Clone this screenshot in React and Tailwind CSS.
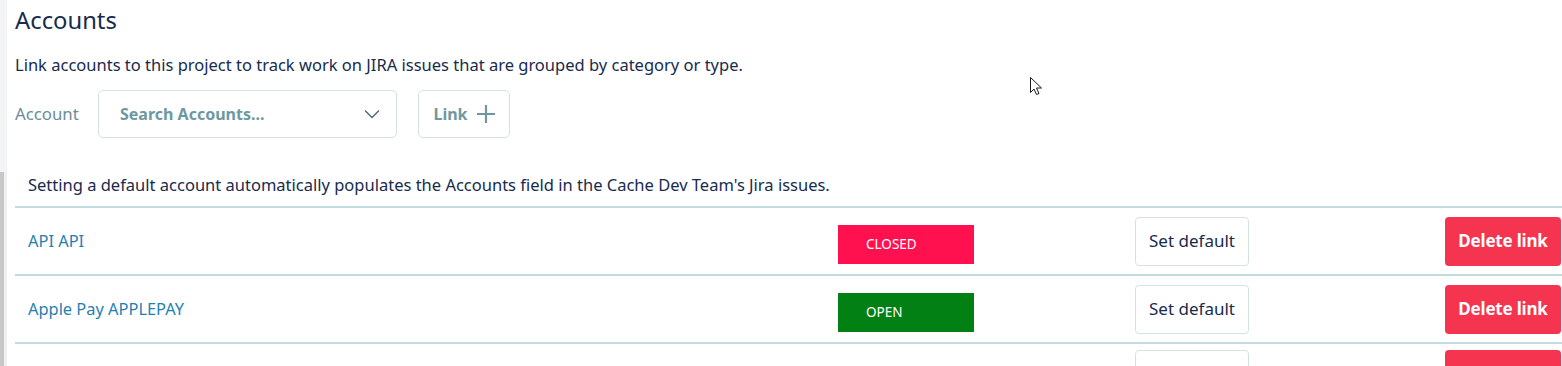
import React from "react";

const rows = [
  { name: "API API", status: "CLOSED", labels: true },
  { name: "Apple Pay APPLEPAY", status: "OPEN", labels: true },
  { name: "", status: null, labels: false },
];

function Row({ name, status, labels }) {
  return (
    <div className="grid grid-cols-[823px_297px_310px_117px] items-center h-[68px] border-t-2 border-[#c3dce3]">
      <div className="pl-[13px] text-[16.4px] text-[#1f80b3]">{name}</div>
      <div>
        {status && (
          <div
            className={
              "mt-[7px] w-[136px] h-[39px] flex items-center pl-[28px] text-[13.5px] text-white " +
              (status === "CLOSED" ? "bg-[#ff1150]" : "bg-[#028013]")
            }
          >
            {status}
          </div>
        )}
      </div>
      <div>
        <button className="w-[114px] h-[49px] rounded-[4px] border border-[#d3e2e8] bg-white text-[17px] text-[#172b4d]">
          {labels ? "Set default" : ""}
        </button>
      </div>
      <div>
        <button className="w-[116px] h-[49px] rounded-[4px] bg-[#f5344f] text-[17px] font-bold text-white tracking-[-0.2px]">
          {labels ? "Delete link" : ""}
        </button>
      </div>
    </div>
  );
}

export default function App() {
  return (
    <div
      className="relative flex w-[1562px] h-[366px] overflow-hidden bg-white"
      style={{ fontFamily: '"Noto Sans", "Open Sans", sans-serif' }}
    >
      <div className="w-[7px] flex flex-col shrink-0">
        <div className="h-[172px] bg-[#f3f4f5]" />
        <div className="flex-1 flex">
          <div className="w-[4px] bg-[#c8c8c8]" />
          <div className="w-[3px] bg-[#f0f0f0]" />
        </div>
      </div>
      <div className="flex-1 pl-[8px]">
        <h1 className="text-[23.8px] leading-[28px] text-[#172b4d] mt-[6px]">Accounts</h1>
        <p className="text-[16.5px] leading-[22px] text-[#172b4d] mt-[20px]">
          Link accounts to this project to track work on JIRA issues that are grouped by category or type.
        </p>
        <div className="flex items-center mt-[14px] h-[48px]">
          <span className="text-[16.8px] text-[#6b8d96] w-[83px]">Account</span>
          <div className="w-[299px] h-[48px] border border-[#d3e2e8] rounded-[5px] flex items-center justify-between pl-[21px] pr-[16px]">
            <span className="text-[16px] font-bold text-[#6e98a1]">Search Accounts...</span>
            <svg width="16" height="10" viewBox="0 0 16 10" fill="none">
              <path d="M1 1.5 L8 8.5 L15 1.5" stroke="#4d6470" strokeWidth="1.3" />
            </svg>
          </div>
          <div className="ml-[21px] w-[92px] h-[48px] border border-[#d3e2e8] rounded-[5px] flex items-center justify-center gap-[9px]">
            <span className="text-[16px] font-bold text-[#6e98a1]">Link</span>
            <svg width="18" height="18" viewBox="0 0 18 18">
              <path d="M9 0 V18 M0 9 H18" stroke="#6e98a1" strokeWidth="2.2" />
            </svg>
          </div>
        </div>
        <p className="text-[16.5px] leading-[22px] text-[#172b4d] pl-[13px] mt-[36px] mb-[10px]">
          Setting a default account automatically populates the Accounts field in the Cache Dev Team's Jira issues.
        </p>
        {rows.map((r, i) => (
          <Row key={i} {...r} />
        ))}
      </div>
      <svg
        className="absolute left-[1030px] top-[77px]"
        width="14"
        height="20"
        viewBox="0 0 14 20"
      >
        <path
          d="M0.5 0.5 L0.5 15.5 L4 12 L6.5 17.5 L9 16.5 L6.5 11 L11.5 11 Z"
          fill="white"
          stroke="#1a1a1a"
          strokeWidth="1"
          strokeLinejoin="round"
        />
      </svg>
    </div>
  );
}
